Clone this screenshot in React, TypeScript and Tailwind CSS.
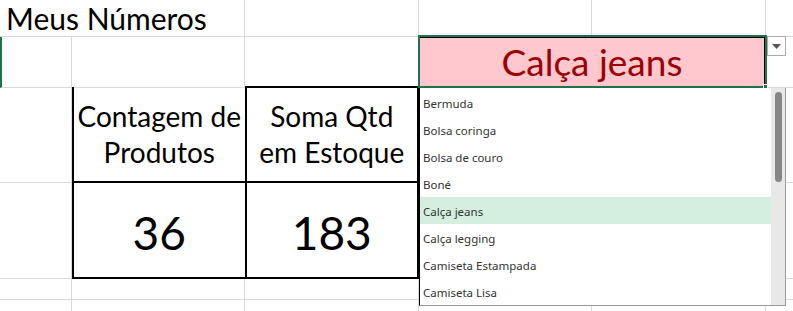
const items = [
  'Bermuda',
  'Bolsa coringa',
  'Bolsa de couro',
  'Boné',
  'Calça jeans',
  'Calça legging',
  'Camiseta Estampada',
  'Camiseta Lisa',
];

const cell = 'border-r border-b border-[#dadada]';

export default function App() {
  return (
    <div className="relative w-[793px] h-[311px] overflow-hidden bg-white" style={{ fontFamily: 'Lato, "Noto Sans", sans-serif' }}>
      <div className="grid grid-cols-[72px_173px_174px_173px_174px_1fr] grid-rows-[37px_51px_95px_96px_21px_1fr] h-full">
        {/* row 1 */}
        <div className={`${cell} col-span-2 flex items-end pl-[6px] pb-[3px] text-[30px] leading-none text-black`}>
          Meus Números
        </div>
        <div className={cell} />
        <div className={cell} />
        <div className={cell} />
        <div className="border-b border-[#dadada]" />

        {/* row 2 */}
        <div className={`${cell} border-l-2 border-l-[#217346]`} />
        <div className={cell} />
        <div className="border-b-2 border-black" />
        <div className="col-span-2 -mt-[2px] -ml-[1px] -mr-[1px] border-2 border-[#217346] bg-[#ffc7ce] relative">
          <div className="h-full border-t border-r border-black flex items-end justify-center pb-[6px] text-[37px] leading-none text-[#9c0006]">
            Calça jeans
          </div>
          <div className="absolute -right-[3px] -bottom-[3px] w-[5px] h-[5px] bg-[#217346] border border-white" />
        </div>
        <div className="border-b border-[#dadada]" />

        {/* rows 3-4: table */}
        <div className={cell} />
        <div className="col-span-2 row-span-2 grid grid-cols-2 grid-rows-2 border-l-2 border-black -mt-[1px]">
          <div className="border-r-2 border-b-2 border-black flex items-center justify-center text-center text-[28px] leading-[36px] text-black">
            Contagem de<br />Produtos
          </div>
          <div className="border-r-2 border-b-2 border-black flex items-center justify-center text-center text-[28px] leading-[36px] text-black">
            Soma Qtd<br />em Estoque
          </div>
          <div className="border-r-2 border-b-2 border-black flex items-center justify-center pt-[6px] text-[46px] leading-none text-black">
            36
          </div>
          <div className="border-r-2 border-b-2 border-black flex items-center justify-center pt-[6px] text-[46px] leading-none text-black">
            183
          </div>
        </div>
        <div className={cell} />
        <div className={cell} />
        <div className="border-b border-[#dadada]" />

        {/* row 4 */}
        <div className={cell} />
        <div className={cell} />
        <div className={cell} />
        <div className="border-b border-[#dadada]" />

        {/* row 5 */}
        <div className={cell} />
        <div className={cell} />
        <div className={cell} />
        <div className={cell} />
        <div className={cell} />
        <div className="border-b border-[#dadada]" />

        {/* row 6 */}
        <div className="border-r border-[#dadada]" />
        <div className="border-r border-[#dadada]" />
        <div className="border-r border-[#dadada]" />
        <div className="border-r border-[#dadada]" />
        <div className="border-r border-[#dadada]" />
        <div />
      </div>

      {/* dropdown button */}
      <div className="absolute left-[767px] top-[36px] w-[19px] h-[20px] border border-[#ababab] bg-white flex items-center justify-center">
        <svg width="9" height="5" viewBox="0 0 9 5">
          <path d="M0 0h9L4.5 5z" fill="#555" />
        </svg>
      </div>

      {/* dropdown list */}
      <div className="absolute left-[419px] top-[88px] w-[367px] h-[218px] border border-[#9a9a9a] border-l-black border-t-0 bg-white flex">
        <div className="flex-1 pt-[1px]" style={{ fontFamily: '"Noto Sans", sans-serif' }}>
          {items.map((it) => (
            <div
              key={it}
              className={`h-[27px] flex items-center pl-[3px] pt-[3px] text-[11.5px] text-[#333] ${it === 'Calça jeans' ? 'bg-[#d4efdf]' : ''}`}
            >
              {it}
            </div>
          ))}
        </div>
        <div className="w-[14px] bg-[#e8e8e8] flex justify-center pt-[4px]">
          <div className="w-[7px] h-[90px] rounded-full bg-[#868686]" />
        </div>
      </div>
    </div>
  );
}
